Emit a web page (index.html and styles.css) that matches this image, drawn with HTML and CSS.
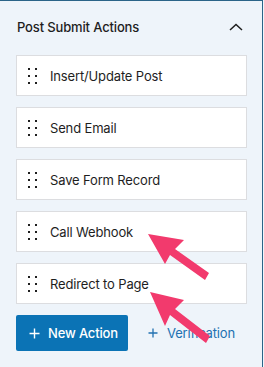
FILE: index.html
```html
<!DOCTYPE html>
<html>
<head>
<meta charset="utf-8">
<link rel="stylesheet" href="styles.css">
</head>
<body>
<div class="panel">
  <div class="header">
    <span class="title">Post Submit Actions</span>
    <svg class="chevron" width="14" height="8" viewBox="0 0 14 8"><path d="M1 7 L7 1.5 L13 7" fill="none" stroke="#1e1e1e" stroke-width="1.5"/></svg>
  </div>
  <div class="list">
    <div class="card"><span class="handle"><i></i><i></i><i></i><i></i><i></i><i></i></span><span class="label">Insert/Update Post</span></div>
    <div class="card"><span class="handle"><i></i><i></i><i></i><i></i><i></i><i></i></span><span class="label">Send Email</span></div>
    <div class="card"><span class="handle"><i></i><i></i><i></i><i></i><i></i><i></i></span><span class="label">Save Form Record</span></div>
    <div class="card"><span class="handle"><i></i><i></i><i></i><i></i><i></i><i></i></span><span class="label">Call Webhook</span></div>
    <div class="card"><span class="handle"><i></i><i></i><i></i><i></i><i></i><i></i></span><span class="label">Redirect to Page</span></div>
  </div>
  <div class="actions">
    <button class="btn-primary"><svg class="plus" width="11" height="11" viewBox="0 0 11 11"><path d="M5.5 0.5 V10.5 M0.5 5.5 H10.5" stroke="#fff" stroke-width="1.4"/></svg>New Action</button>
    <a class="link"><svg class="plus" width="10" height="10" viewBox="0 0 10 10"><path d="M5 0.5 V9.5 M0.5 5 H9.5" stroke="#2271b1" stroke-width="1.3"/></svg>Verification</a>
  </div>
  <svg class="arrows" width="264" height="367" viewBox="0 0 264 367">
    <g fill="#f23a6d">
      <path d="M148 234 L184 240 L175 249 L209 273 L205 280 L170 255 L165 264 Z"/>
      <path d="M150 292 L184 300 L175 309 L210 336 L206 343 L170 315 L165 326 Z"/>
    </g>
  </svg>
</div>
</body>
</html>
```
FILE: styles.css
```css
html, body { margin: 0; padding: 0; }
body { width: 264px; height: 367px; overflow: hidden; background: #f0f5fb; font-family: "Inter", "Liberation Sans", sans-serif; color: #1e1e1e; letter-spacing: -0.15px; }
.panel { position: relative; width: 263px; height: 367px; box-sizing: border-box; background: #eef4fa; border-top: 1px solid #2b6488; border-right: 1px solid #2b6488; padding: 0 15px 0 16px; }
.header { display: flex; justify-content: space-between; align-items: center; height: 54px; }
.title { font-size: 13px; font-weight: 500; padding-left: 1px; margin-top: -2px; }
.chevron { margin-right: 4px; margin-top: -3px; }
.list { display: flex; flex-direction: column; gap: 11px; }
.card { height: 41px; box-sizing: border-box; background: #fff; border: 1px solid #dcdde0; display: flex; align-items: center; padding-left: 11px; }
.handle { display: grid; grid-template-columns: 2px 2px; column-gap: 5px; row-gap: 5px; width: 9px; }
.handle i { display: block; width: 2px; height: 2px; background: #1e1e1e; }
.label { font-size: 13px; margin-left: 13px; }
.actions { display: flex; align-items: center; margin-top: 11px; }
.btn-primary { width: 112px; height: 36px; border: none; border-radius: 2px; background: #0b73b5; color: #fff; font-family: inherit; font-size: 13px; font-weight: 500; letter-spacing: -0.15px; display: flex; align-items: center; padding: 0 0 0 13px; }
.btn-primary .plus { margin-right: 8px; }
.link { color: #2271b1; font-size: 13px; margin-left: 20px; display: flex; align-items: center; }
.link .plus { margin-right: 9px; }
.arrows { position: absolute; left: 0; top: -1px; pointer-events: none; }
```
